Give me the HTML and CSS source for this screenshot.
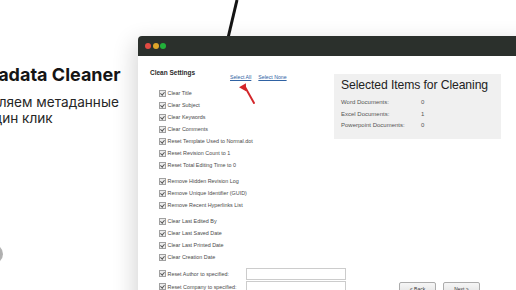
FILE: index.html
```html
<!DOCTYPE html>
<html lang="ru">
<head>
    <meta charset="UTF-8">
    <meta name="viewport" content="width=device-width, initial-scale=1.0">
    <title>Metadata Cleaner</title>
    <link rel="stylesheet" href="styles.css">
</head>
<body>
    <svg class="cable" width="20" height="40" viewBox="0 0 20 40">
        <line x1="16" y1="0" x2="7" y2="38" stroke="#141414" stroke-width="3"/>
    </svg>
    <div class="stage">
        <section class="hero">
            <h1>Metadata Cleaner</h1>
            <p>Удаляем метаданные<br>в один клик</p>
            <div class="hero-dot"></div>
        </section>

        <div class="window">
            <div class="titlebar">
                <span class="dot red"></span>
                <span class="dot yellow"></span>
                <span class="dot green"></span>
            </div>
            <div class="content">
                <div class="settings">
                    <div class="settings-head">
                        <h2>Clean Settings</h2>
                        <div class="links">
                            <a href="#">Select All</a>
                            <a href="#">Select None</a>
                        </div>
                    </div>

                    <ul class="group first">
                        <li><span class="check"></span>Clear Title</li>
                        <li><span class="check"></span>Clear Subject</li>
                        <li><span class="check"></span>Clear Keywords</li>
                        <li><span class="check"></span>Clear Comments</li>
                        <li><span class="check"></span>Reset Template Used to Normal.dot</li>
                        <li><span class="check"></span>Reset Revision Count to 1</li>
                        <li><span class="check"></span>Reset Total Editing Time to 0</li>
                    </ul>
                    <ul class="group">
                        <li><span class="check"></span>Remove Hidden Revision Log</li>
                        <li><span class="check"></span>Remove Unique Identifier (GUID)</li>
                        <li><span class="check"></span>Remove Recent Hyperlinks List</li>
                    </ul>
                    <ul class="group">
                        <li><span class="check"></span>Clear Last Edited By</li>
                        <li><span class="check"></span>Clear Last Saved Date</li>
                        <li><span class="check"></span>Clear Last Printed Date</li>
                        <li><span class="check"></span>Clear Creation Date</li>
                    </ul>
                    <ul class="group">
                        <li class="field"><span class="check"></span><span class="label">Reset Author to specified:</span><input type="text"></li>
                        <li class="field"><span class="check"></span><span class="label">Reset Company to specified:</span><input type="text"></li>
                    </ul>
                </div>

                <div class="side">
                    <div class="summary">
                        <h3>Selected Items for Cleaning</h3>
                        <div class="row"><span>Word Documents:</span><span>0</span></div>
                        <div class="row"><span>Excel Documents:</span><span>1</span></div>
                        <div class="row"><span>Powerpoint Documents:</span><span>0</span></div>
                    </div>
                    <div class="buttons">
                        <button>&lt; Back</button>
                        <button>Next &gt;</button>
                    </div>
                </div>
            </div>

            <svg class="arrow" width="20" height="26" viewBox="0 0 20 26">
                <line x1="16" y1="22" x2="7" y2="6" stroke="#d3262a" stroke-width="2" stroke-linecap="round"/>
                <polygon points="4,1 11,5 4,9" fill="#d3262a" transform="rotate(60 5 5)"/>
            </svg>
        </div>
    </div>
</body>
</html>
```

FILE: styles.css
```css
body {
    margin: 0;
    width: 516px;
    height: 290px;
    overflow: hidden;
    background-color: #ffffff;
    font-family: "Liberation Sans", Arial, sans-serif;
}

.cable {
    position: absolute;
    left: 221px;
    top: 0;
}

.stage {
    display: flex;
    align-items: flex-start;
}

.hero {
    flex: none;
    width: 174px;
    margin-left: -36px;
    padding-top: 64px;
    font-family: Inter, "Noto Sans", sans-serif;
}

.hero h1 {
    margin: 0;
    font-size: 18px;
    line-height: 22px;
    font-weight: 700;
    color: #151515;
    white-space: nowrap;
}

.hero p {
    margin: 8px 0 0 10px;
    font-size: 13.6px;
    line-height: 16px;
    color: #262626;
    white-space: nowrap;
}

.hero-dot {
    width: 20px;
    height: 20px;
    margin: 118px 0 0 19px;
    border-radius: 50%;
    background: radial-gradient(circle at 70% 50%, #a8a8a8, #c8c8c8);
}

.window {
    position: relative;
    flex: none;
    width: 400px;
    height: 300px;
    margin-top: 36px;
    background-color: #ffffff;
    border-radius: 4px 4px 0 0;
    box-shadow: -4px 6px 22px rgba(0, 0, 0, 0.16);
}

.titlebar {
    display: flex;
    align-items: center;
    gap: 1.5px;
    height: 20px;
    padding-left: 7px;
    background-color: #2b302c;
    border-radius: 4px 4px 0 0;
}

.dot {
    width: 6px;
    height: 6px;
    border-radius: 50%;
}

.dot.red { background-color: #e24a42; }
.dot.yellow { background-color: #dfa62a; }
.dot.green { background-color: #22b03a; }

.content {
    display: grid;
    grid-template-columns: 184px 167px;
    padding: 13px 0 0 12px;
    color: #4a4a4a;
}

.settings-head {
    display: flex;
    align-items: flex-start;
}

.settings-head h2 {
    width: 80px;
    margin: 0;
    font-size: 6.5px;
    line-height: 8px;
    font-weight: 700;
    color: #2a2a2a;
}

.links {
    display: flex;
    gap: 7px;
    margin-top: 5px;
}

.links a {
    font-size: 5.2px;
    line-height: 7px;
    color: #2f62a3;
}

.group {
    list-style: none;
    margin: 4px 0 0;
    padding: 0;
}

.group.first {
    margin-top: 6px;
}

.group li {
    display: flex;
    align-items: center;
    height: 12px;
    font-size: 5.4px;
    white-space: nowrap;
}

.group li.field {
    height: 13px;
}

.check {
    position: relative;
    flex: none;
    box-sizing: border-box;
    width: 7px;
    height: 7px;
    margin: 0 1.5px 0 9px;
    border: 1px solid #a0a0a0;
    background-color: #ececec;
}

.check::after {
    content: "";
    position: absolute;
    left: 1.3px;
    top: 0;
    width: 1.5px;
    height: 3px;
    border: solid #555555;
    border-width: 0 0.8px 0.8px 0;
    transform: rotate(40deg);
}

.label {
    flex: none;
    width: 78.5px;
}

.field input {
    flex: none;
    box-sizing: border-box;
    width: 100px;
    height: 12px;
    margin: 0;
    padding: 0;
    border: 1px solid #cccccc;
    background-color: #ffffff;
}

.side {
    display: flex;
    flex-direction: column;
    justify-content: space-between;
}

.summary {
    margin-top: 5px;
    padding: 4px 7px 7px;
    background-color: #f0f0f0;
}

.summary h3 {
    margin: 0 0 5px;
    font-size: 12.2px;
    line-height: 14px;
    font-weight: 400;
    letter-spacing: -0.1px;
    color: #222222;
    white-space: nowrap;
}

.summary .row {
    display: flex;
    font-size: 6px;
    line-height: 11.5px;
    color: #555555;
}

.summary .row span:first-child {
    width: 80px;
}

.buttons {
    display: flex;
    justify-content: flex-end;
    gap: 7px;
    padding-right: 21px;
    margin-bottom: -3px;
}

.buttons button {
    width: 37px;
    height: 14px;
    padding: 0;
    border: 1px solid #acacac;
    border-radius: 2px;
    background: linear-gradient(to bottom, #f6f6f6, #e2e2e2);
    font-family: "Liberation Sans", Arial, sans-serif;
    font-size: 5px;
    color: #333333;
}

.arrow {
    position: absolute;
    left: 100px;
    top: 45px;
}
```
